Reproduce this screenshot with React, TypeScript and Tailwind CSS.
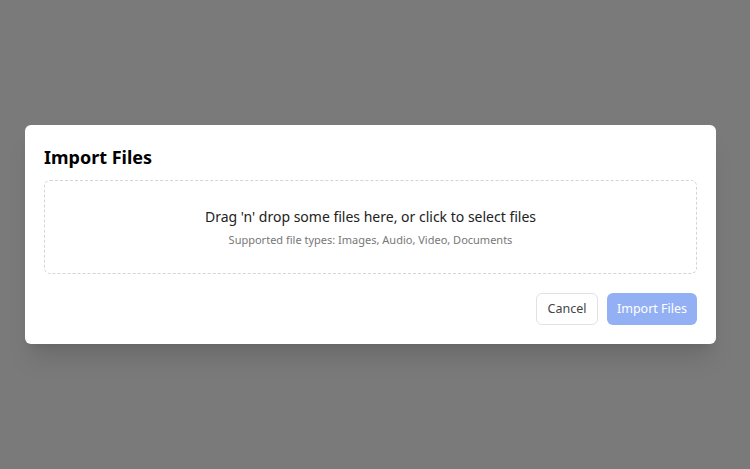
export default function App() {
  return (
    <div className="w-[750px] h-[469px] bg-[#7a7a7a] flex items-center" style={{ fontFamily: '"Noto Sans", "Open Sans", sans-serif' }}>
      <div className="ml-[25px] w-[691px] h-[219px] bg-white rounded-md shadow-xl px-[19px] pt-[19px] flex flex-col">
        <h2 className="text-[18px] font-bold text-black leading-[26px]">Import Files</h2>
        <div className="mt-[10px] h-[94px] border border-dashed border-[#d1d5db] rounded-md flex flex-col items-center justify-center">
          <p className="text-[14px] text-[#222] leading-[20px]">Drag 'n' drop some files here, or click to select files</p>
          <p className="mt-[6px] text-[11px] text-[#777] leading-[14px]">Supported file types: Images, Audio, Video, Documents</p>
        </div>
        <div className="mt-[19px] flex justify-end gap-[9px]">
          <button className="h-[32px] w-[62px] border border-[#e2e2e2] rounded-md text-[12.5px] text-[#444] bg-white">Cancel</button>
          <button className="h-[32px] w-[90px] rounded-md text-[12.5px] text-white bg-[#93b0f5]">Import Files</button>
        </div>
      </div>
    </div>
  );
}
